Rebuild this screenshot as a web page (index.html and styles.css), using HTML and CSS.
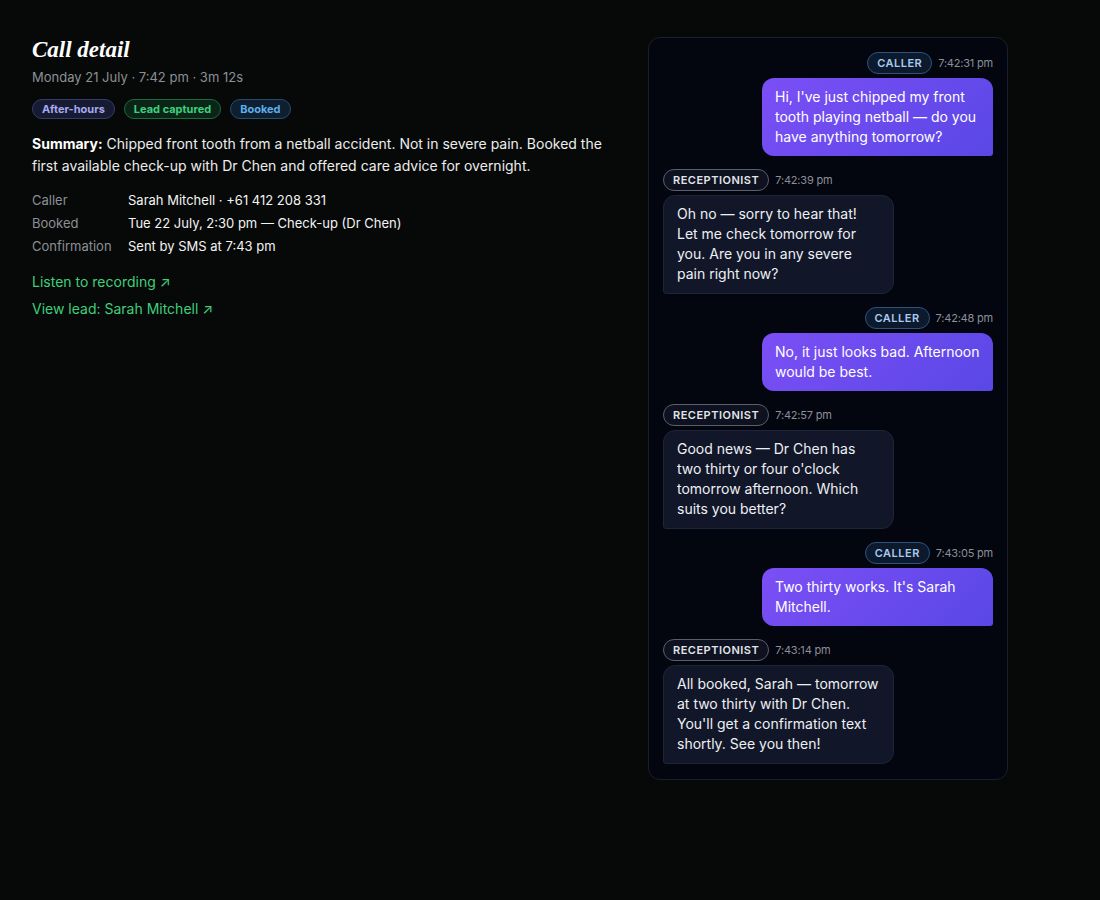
FILE: index.html
```html
<!DOCTYPE html>
<html lang="en">
<head>
    <meta charset="UTF-8">
    <title>Call detail</title>
    <link rel="stylesheet" href="styles.css">
</head>
<body>
    <div class="c_page">
        <div class="c_info">
            <h1 class="c_title">Call detail</h1>
            <div class="c_meta">Monday 21 July · 7:42 pm · 3m 12s</div>
            <div class="c_badges">
                <span class="c_badge purple">After-hours</span>
                <span class="c_badge green">Lead captured</span>
                <span class="c_badge blue">Booked</span>
            </div>
            <p class="c_summary"><b>Summary:</b> Chipped front tooth from a netball accident. Not in severe pain. Booked the first available check-up with Dr Chen and offered care advice for overnight.</p>
            <div class="c_facts">
                <span class="k">Caller</span><span class="v">Sarah Mitchell · +61 412 208 331</span>
                <span class="k">Booked</span><span class="v">Tue 22 July, 2:30 pm — Check-up (Dr Chen)</span>
                <span class="k">Confirmation</span><span class="v">Sent by SMS at 7:43 pm</span>
            </div>
            <div class="c_links">
                <a href="#">Listen to recording ↗</a>
                <a href="#">View lead: Sarah Mitchell ↗</a>
            </div>
        </div>

        <div class="c_chat">
            <div class="msg caller">
                <div class="msg_head"><span class="role">CALLER</span><span class="time">7:42:31 pm</span></div>
                <div class="bubble">Hi, I've just chipped my front tooth playing netball — do you have anything tomorrow?</div>
            </div>
            <div class="msg recep">
                <div class="msg_head"><span class="role">RECEPTIONIST</span><span class="time">7:42:39 pm</span></div>
                <div class="bubble">Oh no — sorry to hear that! Let me check tomorrow for you. Are you in any severe pain right now?</div>
            </div>
            <div class="msg caller">
                <div class="msg_head"><span class="role">CALLER</span><span class="time">7:42:48 pm</span></div>
                <div class="bubble">No, it just looks bad. Afternoon would be best.</div>
            </div>
            <div class="msg recep">
                <div class="msg_head"><span class="role">RECEPTIONIST</span><span class="time">7:42:57 pm</span></div>
                <div class="bubble">Good news — Dr Chen has two thirty or four o'clock tomorrow afternoon. Which suits you better?</div>
            </div>
            <div class="msg caller">
                <div class="msg_head"><span class="role">CALLER</span><span class="time">7:43:05 pm</span></div>
                <div class="bubble">Two thirty works. It's Sarah Mitchell.</div>
            </div>
            <div class="msg recep">
                <div class="msg_head"><span class="role">RECEPTIONIST</span><span class="time">7:43:14 pm</span></div>
                <div class="bubble">All booked, Sarah — tomorrow at two thirty with Dr Chen. You'll get a confirmation text shortly. See you then!</div>
            </div>
        </div>
    </div>
</body>
</html>
```

FILE: styles.css
```css
* {margin: 0; padding: 0; box-sizing: border-box;}
body {background: #070908; color: #e9eaec; font-family: "Inter", "Noto Sans", sans-serif; font-size: 14px;}

.c_page {display: flex; align-items: flex-start; gap: 40px; padding: 36px 32px;}
.c_info {width: 576px; padding-top: 1px;}
.c_title {font-family: "Liberation Serif", "DejaVu Serif", serif; font-style: italic; font-weight: bold; font-size: 23px; line-height: 26px; color: #fff;}
.c_meta {margin-top: 5px; font-size: 13px; line-height: 18px; color: #8b9096;}

.c_badges {display: flex; gap: 9px; margin-top: 13px;}
.c_badge {display: inline-block; height: 20px; line-height: 18px; padding: 0 9px; border-radius: 10px; border: 1px solid; font-size: 11px; font-weight: 700;}
.c_badge.purple {background: #171a33; border-color: #363b69; color: #a6a9ee;}
.c_badge.green {background: #0a2517; border-color: #1d6b3d; color: #3fcf7c;}
.c_badge.blue {background: #0d1f30; border-color: #294c6b; color: #5eaee9;}

.c_summary {margin-top: 14px; font-size: 14px; line-height: 22px; color: #eceded;}
.c_summary b {font-weight: 700; color: #fff;}

.c_facts {display: grid; grid-template-columns: 96px 1fr; margin-top: 12px; font-size: 13px; line-height: 23px;}
.c_facts .k {color: #8b9096;}
.c_facts .v {color: #f3f3f3;}

.c_links {display: flex; flex-direction: column; gap: 5px; margin-top: 13px;}
.c_links a {font-size: 14px; line-height: 22px; color: #3fcf7c; text-decoration: none;}

.c_chat {width: 360px; margin-top: 1px; background: #03050f; border: 1px solid #1b1f2d; border-radius: 12px; padding: 14px 14px 15px; display: flex; flex-direction: column; gap: 13px;}
.msg {display: flex; flex-direction: column; gap: 4px;}
.msg.caller {align-items: flex-end;}
.msg.recep {align-items: flex-start;}
.msg_head {display: flex; align-items: center; gap: 6px; height: 22px;}
.role {height: 22px; line-height: 20px; padding: 0 9px; border-radius: 11px; border: 1px solid; font-size: 11px; font-weight: 600; letter-spacing: 0.5px;}
.caller .role {background: #0d1a2e; border-color: #2c5380; color: #a9cbef;}
.recep .role {background: #0d1120; border-color: #5a5f6c; color: #e2e4e8;}
.time {font-size: 11px; color: #8b9096; letter-spacing: -0.2px;}

.bubble {max-width: 231px; padding: 9px 13px; font-size: 14px; line-height: 20px; border-radius: 12px;}
.caller .bubble {background: linear-gradient(135deg, #7b4ff5, #5a47e6); color: #fff; border-bottom-right-radius: 3px;}
.recep .bubble {background: #111729; border: 1px solid #1e2538; padding: 8px 13px 9px; color: #eef0f3; border-bottom-left-radius: 3px;}
```
